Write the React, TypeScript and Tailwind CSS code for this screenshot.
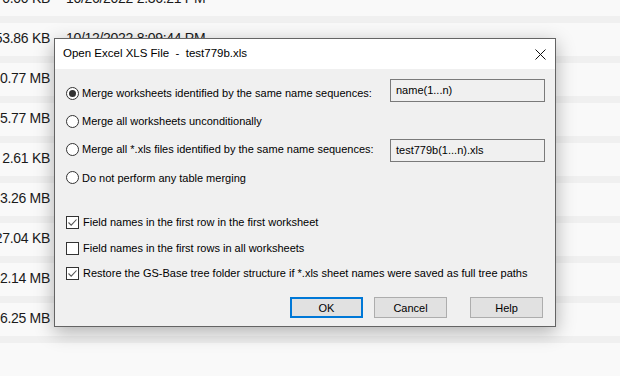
import React from 'react';

const rows = [
  ['0.00 KB', '10/26/2022 2:36:21 PM'],
  ['53.86 KB', '10/12/2022 8:09:44 PM'],
  ['30.77 MB', '10/12/2022 8:09:44 PM'],
  ['95.77 MB', '10/12/2022 8:09:44 PM'],
  ['2.61 KB', '10/12/2022 8:09:44 PM'],
  ['13.26 MB', '10/12/2022 8:09:44 PM'],
  ['27.04 KB', '10/12/2022 8:09:44 PM'],
  ['52.14 MB', '10/12/2022 8:09:44 PM'],
  ['96.25 MB', '10/12/2022 8:09:44 PM'],
];

function Radio({ checked, label }: { checked?: boolean; label: string }) {
  return (
    <div className="flex items-center h-[14px]">
      <span className="w-[13px] h-[13px] rounded-full border border-[#333] bg-white flex items-center justify-center shrink-0">
        {checked && <span className="w-[7px] h-[7px] rounded-full bg-[#333]" />}
      </span>
      <span className="ml-[3px] whitespace-nowrap">{label}</span>
    </div>
  );
}

function Check({ checked, label }: { checked?: boolean; label: string }) {
  return (
    <div className="flex items-center h-[14px]">
      <span className="w-[13px] h-[13px] border border-[#333] bg-white flex items-center justify-center shrink-0">
        {checked && (
          <svg width="11" height="11" viewBox="0 0 11 11">
            <path d="M1.5 5.5 L4.2 8.2 L9.5 2.5" fill="none" stroke="#555" strokeWidth="1.1" />
          </svg>
        )}
      </span>
      <span className="ml-[4px] whitespace-nowrap">{label}</span>
    </div>
  );
}

function Field({ value }: { value: string }) {
  return (
    <div className="w-[155px] h-[23px] border border-[#7a7a7a] bg-[#f0f0f0] px-[5px] pt-[3px] leading-[14px] whitespace-nowrap">
      {value}
    </div>
  );
}

function Btn({ label, primary }: { label: string; primary?: boolean }) {
  return (
    <div
      className={
        primary
          ? 'w-[73px] h-[21px] border-2 border-[#0078d7] bg-[#e1e1e1] flex items-center justify-center'
          : 'w-[73px] h-[21px] border border-[#adadad] bg-[#e1e1e1] flex items-center justify-center'
      }
    >
      {label}
    </div>
  );
}

export default function App() {
  return (
    <div className="relative w-[620px] h-[376px] overflow-hidden bg-[#f9f9f9]">
      {/* file list behind the dialog */}
      <div className="-mt-[17px] text-[14px] tracking-[-0.3px] text-[#1a1a1a]" style={{ fontFamily: '"Liberation Sans", Arial, sans-serif' }}>
        {rows.map(([size, date], i) => (
          <div key={i} className="h-[40px] flex flex-col">
            <div className="h-[33px] flex pt-[7px] leading-[16px]">
              <div className="w-[50px] flex justify-end whitespace-nowrap overflow-visible">{size}</div>
              <div className="ml-[16px] whitespace-nowrap">{date}</div>
            </div>
            <div className="h-[7px] bg-[#f0f0f0]" />
          </div>
        ))}
      </div>

      {/* dialog */}
      <div
        className="absolute left-[54px] top-[38px] w-[502px] h-[289px] border border-[#646464] bg-[#f0f0f0] flex flex-col text-[11px] text-black shadow-[0_5px_18px_rgba(0,0,0,0.3)]"
        style={{ fontFamily: '"Liberation Sans", Arial, sans-serif' }}
      >
        <div className="h-[30px] bg-white flex items-center justify-between pl-[8px] pr-[9px] shrink-0 text-[11.5px]">
          <span className="whitespace-pre">{'Open Excel XLS File  -  test779b.xls'}</span>
          <svg width="11" height="11" viewBox="0 0 11 11">
            <path d="M0.5 0.5 L10.5 10.5 M10.5 0.5 L0.5 10.5" stroke="#111" strokeWidth="1" />
          </svg>
        </div>

        <div className="flex flex-col pl-[11px] pr-[10px] pt-[10px] leading-[14px]">
          <div className="h-[28px] flex justify-between items-start">
            <div className="mt-[7px]"><Radio checked label="Merge worksheets identified by the same name sequences:" /></div>
            <Field value="name(1...n)" />
          </div>
          <div className="h-[28px] flex items-center">
            <Radio label="Merge all worksheets unconditionally" />
          </div>
          <div className="h-[28px] flex justify-between items-start">
            <div className="mt-[7px]"><Radio label="Merge all *.xls files identified by the same name sequences:" /></div>
            <div className="mt-[4px]"><Field value="test779b(1...n).xls" /></div>
          </div>
          <div className="h-[29px] flex items-center">
            <Radio label="Do not perform any table merging" />
          </div>

          <div className="mt-[17px] h-[26px] flex items-center">
            <Check checked label="Field names in the first row in the first worksheet" />
          </div>
          <div className="h-[26px] flex items-center">
            <Check label="Field names in the first rows in all worksheets" />
          </div>
          <div className="h-[24px] flex items-center">
            <Check checked label="Restore the GS-Base tree folder structure if *.xls sheet names were saved as full tree paths" />
          </div>

          <div className="mt-[12px] flex justify-end pr-[2px]">
            <Btn primary label="OK" />
            <div className="ml-[11px]"><Btn label="Cancel" /></div>
            <div className="ml-[23px]"><Btn label="Help" /></div>
          </div>
        </div>
      </div>
    </div>
  );
}
